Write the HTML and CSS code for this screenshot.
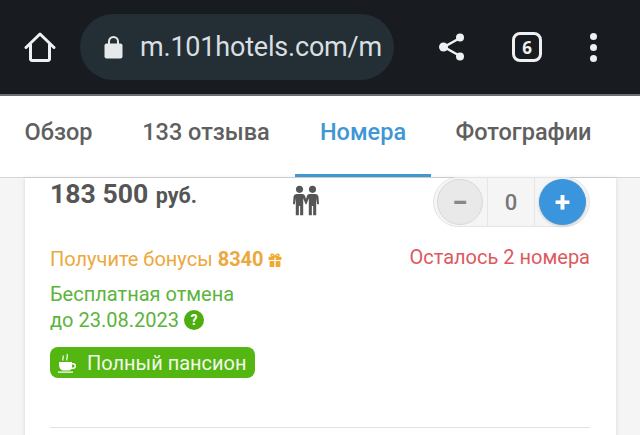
FILE: index.html
```html
<!DOCTYPE html>
<html lang="ru">
<head>
    <meta charset="UTF-8">
    <title>m.101hotels.com</title>
    <link rel="stylesheet" href="styles.css">
</head>
<body>
    <header class="toolbar">
        <svg class="home" width="32" height="32" viewBox="0 0 32 32">
            <path d="M2 16.500 16 3 30 16.500M6.500 13.500V28a1.500 1.500 0 0 0 1.500 1.500h16a1.500 1.500 0 0 0 1.500-1.500V13.500" fill="none" stroke="#eef0f1" stroke-width="3" stroke-linejoin="round" stroke-linecap="round"/>
        </svg>
        <div class="urlbar">
            <svg class="lock" width="19" height="24" viewBox="0 0 19 24">
                <path d="M5 10V6.500a4.500 4.500 0 0 1 9 0V10" fill="none" stroke="#e6e9eb" stroke-width="2"/>
                <rect y="8.500" x="0.500" width="18" height="15" rx="2" fill="#e6e9eb"/>
            </svg>
            <span class="url">m.101hotels.com/m</span>
        </div>
        <svg class="share" width="28" height="30" viewBox="0 0 28 30">
            <path d="M22 6 6 15 22 24" fill="none" stroke="#eef0f1" stroke-width="2.500"/>
            <circle cx="22" cy="5.500" r="4" fill="#eef0f1"/>
            <circle cx="5.500" cy="15" r="4.500" fill="#eef0f1"/>
            <circle cx="22" cy="24.500" r="4" fill="#eef0f1"/>
        </svg>
        <div class="tabcount">6</div>
        <div class="dots"><i></i><i></i><i></i></div>
    </header>

    <nav class="tabs">
        <a class="tab tab-overview">Обзор</a>
        <a class="tab tab-reviews">133 отзыва</a>
        <a class="tab tab-rooms active">Номера</a>
        <a class="tab tab-photos">Фотографии</a>
    </nav>

    <main class="page">
        <section class="card">
            <div class="row-top">
                <div class="price">183 500 <small>руб.</small></div>
                <svg class="guests" width="26" height="31" viewBox="0 0 28 32">
                    <g fill="#555">
                        <circle cx="7" cy="4" r="3.800"/>
                        <circle cx="21" cy="4" r="3.800"/>
                        <path d="M4 9h6c1.500 0 2.500.8 3 2.200l1 3.300 1-3.300C15.500 9.800 16.500 9 18 9h6c1.800 0 3 1 3.400 2.800L28 20h-2l-1-6.500V32h-3.300V22h-1.400v10H17V13.500L14.500 20h-1L11 13.500V32H7.700V22H6.300v10H3V13.500L2 20H0l.6-8.200C1 10 2.200 9 4 9z"/>
                    </g>
                </svg>
                <div class="stepper">
                    <button class="step minus">−</button>
                    <span class="count">0</span>
                    <button class="step plus">+</button>
                </div>
            </div>
            <div class="row-bonus">
                <div class="bonus">Получите бонусы <b>8340</b><svg class="gift" width="16" height="15" viewBox="0 0 14 14">
                        <path d="M1 3.500h5.400v3H1zM7.600 3.500H13v3H7.600zM2 7.500h4.400V13H2zM7.600 7.500H12V13H7.600z" fill="#eeab32"/>
                        <path d="M7 3.500C5.500.5 3 .5 3.200 2 3.300 3.200 5.500 3.500 7 3.500 8.500 3.500 10.700 3.200 10.800 2 11 .5 8.500.5 7 3.500z" fill="none" stroke="#eeab32" stroke-width="1.200"/>
                    </svg>
                </div>
                <div class="left">Осталось 2 номера</div>
            </div>
            <div class="cancel">
                Бесплатная отмена<br>
                до 23.08.2023 <span class="help">?</span>
            </div>
            <div class="board">
                <svg width="20" height="20" viewBox="0 0 20 20">
                    <path d="M2 9h13v1h1a3 3 0 0 1 0 6h-1.500a5 5 0 0 1-2 1.500H5.500A6 6 0 0 1 2 12zM15 11.500v3h1a1.500 1.500 0 0 0 0-3zM1 18.500h15v1.200H1z" fill="#fff" fill-rule="evenodd"/>
                    <path d="M6 7.500C4.800 6 7.200 5 6 2.500M10 7.500C8.800 6 11.200 4.500 10 1" fill="none" stroke="#fff" stroke-width="1.200"/>
                </svg>
                <span>Полный пансион</span>
            </div>
            <hr class="divider">
        </section>
    </main>
</body>
</html>
```

FILE: styles.css
```css
html, body {
    margin: 0;
    height: 435px;
    overflow: hidden;
}
body {
    width: 640px;
    background: #f5f5f5;
    font-family: Roboto, "Liberation Sans", sans-serif;
    color: #555;
}

.toolbar {
    height: 94px;
    background: #181b1f;
    border-bottom: 2px solid #6c6f72;
    display: flex;
    align-items: center;
    box-sizing: content-box;
}
.home {
    margin-left: 24px;
    flex: none;
}
.urlbar {
    margin-left: 24px;
    width: 314px;
    height: 66px;
    border-radius: 33px;
    background: #232e35;
    display: flex;
    align-items: center;
    overflow: hidden;
    flex: none;
}
.lock {
    margin-left: 24px;
    flex: none;
}
.url {
    margin-left: 17px;
    font-size: 27px;
    letter-spacing: -.2px;
    color: #d9dee1;
    white-space: nowrap;
}
.share {
    margin-left: 44px;
    flex: none;
}
.tabcount {
    margin-left: 46px;
    width: 24px;
    height: 24px;
    border: 3px solid #eef0f1;
    border-radius: 8px;
    color: #eef0f1;
    font-size: 17px;
    font-weight: 700;
    display: flex;
    align-items: center;
    justify-content: center;
    font-family: "Open Sans", sans-serif;
}
.dots {
    margin-left: 48px;
    display: flex;
    flex-direction: column;
    gap: 4px;
}
.dots i {
    display: block;
    width: 7px;
    height: 7px;
    border-radius: 50%;
    background: #eef0f1;
}

.tabs {
    height: 81px;
    background: #fff;
    border-bottom: 1px solid #d5d5d5;
    display: flex;
    box-sizing: content-box;
}
.tab {
    font-size: 23.500px;
    font-weight: 500;
    color: #5f5f5f;
    line-height: 73px;
    height: 81px;
    box-sizing: border-box;
    text-align: center;
    white-space: nowrap;
}
.tab-overview { width: 117px; }
.tab-reviews { width: 178px; }
.tab-rooms { width: 136px; }
.tab-photos { width: 185px; }
.tab.active {
    color: #3f97d3;
    border-bottom: 3px solid #3f97d3;
}

.page {
    padding: 0 24px 0 25px;
}
.card {
    background: #fff;
    height: 260px;
    padding: 0 26px 0 25px;
    box-shadow: 0 0 4px rgba(0, 0, 0, .12);
}

.row-top {
    display: flex;
    height: 48px;
    align-items: flex-start;
}
.price {
    font-size: 26.600px;
    font-weight: 700;
    line-height: 32px;
    width: 243px;
    flex: none;
}
.price small {
    font-size: 21.500px;
    margin-left: 1px;
}
.guests {
    margin-top: 7px;
    flex: none;
}
.stepper {
    margin-left: auto;
    margin-top: -1px;
    width: 157px;
    height: 50px;
    box-sizing: border-box;
    border: 1px solid #e4e4e4;
    border-radius: 25px;
    background: #f5f5f5;
    display: flex;
    align-items: center;
    padding: 0 3px;
}
.step {
    width: 46px;
    height: 46px;
    flex: none;
    border-radius: 50%;
    border: 1px solid #d8d8d8;
    background: #e9e9e9;
    color: #888;
    font: 700 28px Roboto, sans-serif;
    padding: 0;
}
.step.plus {
    width: 47px;
    background: #3a95dc;
    border-color: #3a95dc;
    color: #fff;
    box-shadow: 0 1px 3px rgba(0, 0, 0, .2);
}
.count {
    flex: 1;
    align-self: stretch;
    margin: 0 4px;
    border-left: 1px solid #e6e6e6;
    border-right: 1px solid #e6e6e6;
    font-size: 22px;
    font-weight: 500;
    color: #777;
    display: flex;
    align-items: center;
    justify-content: center;
}

.row-bonus {
    display: flex;
    justify-content: space-between;
    align-items: flex-start;
    margin-top: 19px;
    font-size: 20px;
    line-height: 24px;
}
.bonus {
    color: #eba93d;
    padding-top: 2px;
}
.bonus b {
    font-weight: 700;
}
.gift {
    margin-left: 3px;
    vertical-align: -2px;
}
.left {
    color: #dc5a5e;
}

.cancel {
    margin-top: 10px;
    font-size: 20px;
    line-height: 26px;
    color: #5bb43c;
}
.help {
    display: inline-block;
    width: 20px;
    height: 20px;
    border-radius: 50%;
    background: #4dae0f;
    color: #fff;
    font-size: 14px;
    font-weight: 700;
    line-height: 20px;
    text-align: center;
    vertical-align: 2px;
}

.board {
    margin-top: 14px;
    width: 205px;
    height: 31px;
    border-radius: 8px;
    background: #53b611;
    color: #f1f9ec;
    font-size: 20px;
    display: flex;
    align-items: center;
    padding-left: 7px;
    box-sizing: border-box;
    gap: 10px;
}

.divider {
    margin: 49px 0 0;
    border: 0;
    border-top: 1px solid #e2e2e2;
}
```
